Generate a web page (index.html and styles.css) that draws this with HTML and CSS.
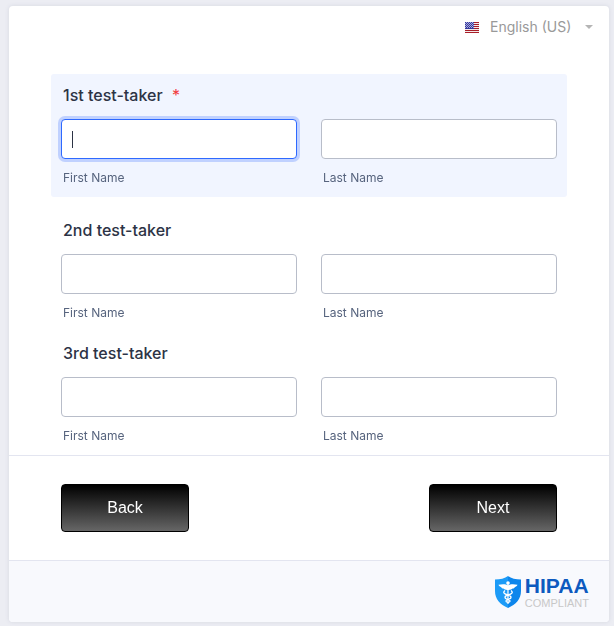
FILE: index.html
```html
<!DOCTYPE html>
<html lang="en">
<head>
    <meta charset="UTF-8">
    <meta name="viewport" content="width=device-width, initial-scale=1">
    <title>Test-taker Registration</title>
    <link rel="stylesheet" href="styles.css">
</head>
<body>

    <form class="form-card">
        <div class="language-bar">
            <svg class="flag" width="14" height="11" viewBox="0 0 14 11" shape-rendering="crispEdges" aria-hidden="true">
                <rect width="14" height="11" fill="#f4e9ea"/>
                <path d="M0 0h14v1H0zM0 2h14v1H0zM0 4h14v1H0zM0 6h14v1H0zM0 8h14v1H0zM0 10h14v1H0z" fill="#a81e28"/>
                <rect width="9" height="7" fill="#34389c"/>
                <path d="M1 0h1v1H1zM3 0h1v1H3zM5 0h1v1H5zM7 0h1v1H7zM0 1h1v1H0zM2 1h1v1H2zM4 1h1v1H4zM6 1h1v1H6zM8 1h1v1H8zM1 2h1v1H1zM3 2h1v1H3zM5 2h1v1H5zM7 2h1v1H7zM0 3h1v1H0zM2 3h1v1H2zM4 3h1v1H4zM6 3h1v1H6zM8 3h1v1H8zM1 4h1v1H1zM3 4h1v1H3zM5 4h1v1H5zM7 4h1v1H7zM0 5h1v1H0zM2 5h1v1H2zM4 5h1v1H4zM6 5h1v1H6zM8 5h1v1H8z" fill="#a9abdc"/>
            </svg>
            <select class="language-select" aria-label="Language">
                <option>English (US)</option>
            </select>
            <svg class="arrow" width="8" height="4" viewBox="0 0 8 4" aria-hidden="true">
                <path d="M0 0h8L4 4z" fill="#b5b5b5"/>
            </svg>
        </div>

        <div class="questions">
            <fieldset class="question active">
                <legend class="question-label">1st test-taker <span class="required">*</span></legend>
                <div class="name-row">
                    <div class="name-field">
                        <input type="text" id="first1" class="text-input" placeholder=" " required autofocus>
                        <label for="first1" class="sub-label">First Name</label>
                    </div>
                    <div class="name-field">
                        <input type="text" id="last1" class="text-input" placeholder=" " required>
                        <label for="last1" class="sub-label">Last Name</label>
                    </div>
                </div>
            </fieldset>

            <fieldset class="question">
                <legend class="question-label">2nd test-taker</legend>
                <div class="name-row">
                    <div class="name-field">
                        <input type="text" id="first2" class="text-input" placeholder=" ">
                        <label for="first2" class="sub-label">First Name</label>
                    </div>
                    <div class="name-field">
                        <input type="text" id="last2" class="text-input" placeholder=" ">
                        <label for="last2" class="sub-label">Last Name</label>
                    </div>
                </div>
            </fieldset>

            <fieldset class="question">
                <legend class="question-label">3rd test-taker</legend>
                <div class="name-row">
                    <div class="name-field">
                        <input type="text" id="first3" class="text-input" placeholder=" ">
                        <label for="first3" class="sub-label">First Name</label>
                    </div>
                    <div class="name-field">
                        <input type="text" id="last3" class="text-input" placeholder=" ">
                        <label for="last3" class="sub-label">Last Name</label>
                    </div>
                </div>
            </fieldset>
        </div>

        <div class="page-buttons">
            <button type="button" class="page-button">Back</button>
            <button type="button" class="page-button">Next</button>
        </div>

        <div class="form-footer">
            <svg class="shield" width="26" height="32" viewBox="0 0 26 32" aria-hidden="true">
                <path d="M13 0C10 2.400 5 3.600 0 3.600V15c0 8 5 13.500 13 17z" fill="#1c9bf7"/>
                <path d="M13 0c3 2.400 8 3.600 13 3.600V15c0 8-5 13.500-13 17z" fill="#0d86ec"/>
                <circle cx="13" cy="7" r="1.800" fill="#fff"/>
                <path d="M13 9.600C11 7.800 7 7.800 3.500 8.800c.6 1.400 1.500 1.900 2.600 2.100.4 1.100 1.300 1.600 2.300 1.700.9 1.100 2.400 1.400 4.600 1.300 2.200.1 3.700-.2 4.600-1.300 1-.1 1.900-.6 2.300-1.700 1.100-.2 2-.7 2.600-2.100C19 7.800 15 7.800 13 9.600z" fill="#fff"/>
                <path d="M13 8v20" stroke="#fff" stroke-width="1.200"/>
                <path d="M10 14.500c-2.500 2-1 3.500 3 4.500 4 1 4 3.500 0 4.500-2.800.8-2.800 2.200 0 3M16 14.500c2.500 2 1 3.500-3 4.500-4 1-4 3.500 0 4.500 2.800.8 2.800 2.200 0 3" fill="none" stroke="#fff" stroke-width="1.300"/>
            </svg>
            <div class="badge-text">
                <span class="badge-title">HIPAA</span>
                <span class="badge-subtitle">COMPLIANT</span>
            </div>
        </div>
    </form>

</body>
</html>
```
FILE: styles.css
```css
* {
    box-sizing: border-box;
}

body {
    margin: 0;
    padding: 6px 5px 4px 9px;
    background: #ecedf3;
    font-family: Inter, "Liberation Sans", sans-serif;
    color: #2c3345;
}

.form-card {
    background: #fff;
    border-radius: 4px;
    box-shadow: 0 0 4px rgba(87, 100, 126, 0.15);
    overflow: hidden;
}

.language-bar {
    display: flex;
    align-items: center;
    justify-content: flex-end;
    height: 68px;
    padding: 0 16px 26px 0;
}

.language-select {
    appearance: none;
    margin: 0 13px 0 11px;
    padding: 0;
    border: 0;
    background: none;
    color: #999;
    font-family: inherit;
    font-size: 14px;
    line-height: 20px;
}

.questions {
    padding: 0 42px;
}

.question {
    min-width: 0;
    margin: 0;
    padding: 10px 10px 11px;
    border: 0;
    border-radius: 3px;
}

.question.active {
    margin-bottom: 12px;
    background: #f1f5ff;
}

.question-label {
    float: left;
    width: 100%;
    margin-bottom: 13px;
    padding: 0 2px;
    font-size: 16px;
    font-weight: 500;
    line-height: 22px;
}

.required {
    margin-left: 5px;
    color: #f23a3c;
    font-weight: 400;
}

.name-row {
    display: flex;
    clear: both;
    gap: 24px;
}

.name-field {
    flex: 1;
    min-width: 0;
}

.text-input {
    display: block;
    width: 100%;
    height: 40px;
    padding: 0 10px;
    border: 1px solid #b8bdc9;
    border-radius: 4px;
    outline: 0;
    background: #fff;
    color: #2c3345;
    font-family: inherit;
    font-size: 16px;
}

.text-input:focus {
    border-color: #2e69ff;
    box-shadow: 0 0 0 3px rgba(46, 105, 255, 0.25);
}

/* steady caret while the field is still empty */
.text-input:focus:placeholder-shown {
    background: #fff linear-gradient(#2c3345, #2c3345) 10px center / 1px 17px no-repeat;
    caret-color: transparent;
}

.sub-label {
    display: block;
    margin-top: 11px;
    padding: 0 2px;
    color: #57647e;
    font-size: 12px;
    line-height: 16px;
}

.page-buttons {
    display: flex;
    justify-content: space-between;
    padding: 28px 52px;
    border-top: 1px solid #e3e5f0;
}

.page-button {
    width: 128px;
    height: 48px;
    border: 1px solid #000;
    border-radius: 4px;
    background: linear-gradient(#000, #666);
    color: #fff;
    font-family: "Liberation Sans", Arial, sans-serif;
    font-size: 16px;
}

.form-footer {
    display: flex;
    align-items: center;
    justify-content: flex-end;
    gap: 4px;
    height: 62px;
    padding-right: 20px;
    border-top: 1px solid #e3e5f0;
    background: #f8f9fd;
}

.badge-text {
    display: flex;
    flex-direction: column;
    font-family: "Liberation Sans", Arial, sans-serif;
}

.badge-title {
    color: #0d5abf;
    font-size: 21px;
    font-weight: 700;
    line-height: 22px;
}

.badge-subtitle {
    color: #c8c8c8;
    font-size: 11px;
    line-height: 12px;
}
```
